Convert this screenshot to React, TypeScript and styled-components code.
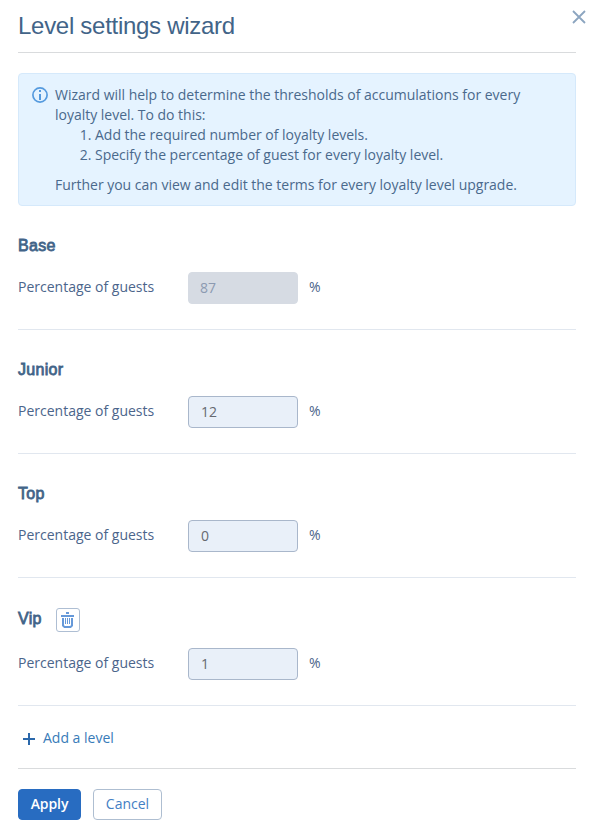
import React from "react";
import styled, { createGlobalStyle } from "styled-components";

const GlobalStyle = createGlobalStyle`
  *, *::before, *::after { box-sizing: border-box; }
  body {
    margin: 0;
    background: #fff;
    font-family: "Open Sans", sans-serif;
    font-size: 14px;
    line-height: 20px;
    color: #456286;
  }
`;

const Dialog = styled.main`
  width: 594px;
  height: 836px;
  padding: 0 18px;
  background: #fff;
`;

const Header = styled.header`
  display: flex;
  justify-content: space-between;
  align-items: flex-start;
  height: 53px;
  border-bottom: 1px solid #d9dbdd;
`;

const Title = styled.h1`
  margin: 9px 0 0;
  font: 400 24px/34px "Liberation Sans", sans-serif;
  letter-spacing: -0.28px;
  color: #426488;
`;

const CloseButton = styled.button`
  display: flex;
  margin: 10px -10px 0 0;
  padding: 0;
  border: 0;
  background: none;
  color: #8ca5c0;
`;

const Notice = styled.section`
  display: flex;
  height: 133px;
  margin-top: 20px;
  padding: 11px 13px;
  border: 1px solid #d5e9fb;
  border-radius: 4px;
  background: #e5f3ff;
  color: #4a698c;
  svg { flex: none; margin: 2px 7px 0 0; }
`;

const NoticeText = styled.div`
  width: 480px;
  letter-spacing: -0.014px;
  p { margin: 0; }
`;

const Steps = styled.ol`
  margin: 0 0 10px;
  padding: 0 0 0 40px;
`;

const LevelSection = styled.section<{ $removable: boolean }>`
  padding: ${(p) => (p.$removable ? 30 : 27)}px 0 25px;
  border-bottom: 1px solid #e1e7ef;
`;

const LevelHeading = styled.div<{ $removable: boolean }>`
  display: flex;
  gap: 14px;
  height: 24px;
  margin-bottom: ${(p) => (p.$removable ? 16 : 15)}px;
`;

const LevelName = styled.h2<{ $raised: boolean }>`
  margin: ${(p) => (p.$raised ? -1 : 1)}px 0 0;
  font: 400 16px/24px "Liberation Sans", sans-serif;
  letter-spacing: 0.3px;
  -webkit-text-stroke: 0.8px #426488;
  color: #426488;
`;

const DeleteButton = styled.button`
  display: flex;
  width: 24px;
  height: 24px;
  padding: 3px;
  border: 1px solid #aebed3;
  border-radius: 3px;
  background: #fff;
`;

const Field = styled.label`
  display: flex;
  align-items: center;
  height: 32px;
`;

const FieldLabel = styled.span`
  width: 170px;
  margin-top: -2px;
  color: #4b658b;
`;

const Input = styled.input`
  width: 110px;
  height: 32px;
  padding: 0 12px 1px;
  border: 1px solid #a9b7cb;
  border-radius: 4px;
  outline: 0;
  background: #e9f0f9;
  font: 14px/20px "Open Sans", sans-serif;
  color: #666970;
  &:disabled {
    padding-left: 11px;
    border-color: #d6dbe3;
    background: #d6dbe3;
    color: #8c9ab1;
  }
`;

const Unit = styled.span`
  margin: -2px 0 0 11px;
  color: #4b658b;
`;

const AddButton = styled.button`
  display: flex;
  align-items: center;
  gap: 8px;
  height: 62px;
  padding: 0 0 0 5px;
  border: 0;
  background: none;
  font: 14px/20px "Open Sans", sans-serif;
  color: #387bb8;
  svg { margin-top: 4px; }
  span { margin-top: 2px; }
`;

const Footer = styled.footer`
  display: flex;
  gap: 12px;
  padding-top: 20px;
  border-top: 1px solid #d9dbdd;
`;

const Button = styled.button<{ $primary?: boolean }>`
  width: ${(p) => (p.$primary ? 63 : 69)}px;
  height: 31px;
  padding: 0 0 1px;
  border: 1px solid ${(p) => (p.$primary ? "#286cc1" : "#aebed1")};
  border-radius: 4px;
  background: ${(p) => (p.$primary ? "#286cc1" : "#fff")};
  font: ${(p) => (p.$primary ? 600 : 400)} 14px/20px "Open Sans", sans-serif;
  letter-spacing: ${(p) => (p.$primary ? -0.1 : 0)}px;
  color: ${(p) => (p.$primary ? "#fff" : "#4380c4")};
`;

const CloseIcon = () => (
  <svg width="14" height="14" viewBox="0 0 14 14" stroke="currentColor" strokeWidth="1.8">
    <path d="M1 1l12 12M13 1L1 13" />
  </svg>
);

const InfoIcon = () => (
  <svg width="16" height="16" viewBox="0 0 16 16">
    <circle cx="8" cy="8" r="7.1" fill="none" stroke="#559ade" strokeWidth="1.7" />
    <path d="M7 3h2v2H7zM7 7h2v6H7z" fill="#559ade" />
  </svg>
);

const TrashIcon = () => (
  <svg width="16" height="16" viewBox="0 0 16 16" fill="#6699d9">
    <path d="M6 0h3v2H6zM1 3h13v2H1z" />
    <path d="M3 6v7.5L4.5 15h6L12 13.5V6" fill="none" stroke="#6699d9" strokeWidth="2" />
    <path d="M5 6h1v6H5zM7 6h1v6H7zM9 6h1v6H9z" />
  </svg>
);

const PlusIcon = () => (
  <svg width="12" height="12" viewBox="0 0 12 12" fill="#2b68ab">
    <path d="M5 0h2v5h5v2H7v5H5V7H0V5h5z" />
  </svg>
);

type Level = { name: string; value: string; disabled?: boolean; removable?: boolean };

const levels: Level[] = [
  { name: "Base", value: "87", disabled: true },
  { name: "Junior", value: "12" },
  { name: "Top", value: "0" },
  { name: "Vip", value: "1", removable: true },
];

function LevelRow({ name, value, disabled, removable = false }: Level) {
  return (
    <LevelSection $removable={removable}>
      <LevelHeading $removable={removable}>
        <LevelName $raised={removable}>{name}</LevelName>
        {removable && (
          <DeleteButton aria-label={`Delete ${name}`}>
            <TrashIcon />
          </DeleteButton>
        )}
      </LevelHeading>
      <Field>
        <FieldLabel>Percentage of guests</FieldLabel>
        <Input defaultValue={value} disabled={disabled} />
        <Unit>%</Unit>
      </Field>
    </LevelSection>
  );
}

export default function App() {
  return (
    <>
      <GlobalStyle />
      <Dialog>
        <Header>
          <Title>Level settings wizard</Title>
          <CloseButton aria-label="Close"><CloseIcon /></CloseButton>
        </Header>
        <Notice>
          <InfoIcon />
          <NoticeText>
            <p>Wizard will help to determine the thresholds of accumulations for every loyalty level. To do this:</p>
            <Steps>
              <li>Add the required number of loyalty levels.</li>
              <li>Specify the percentage of guest for every loyalty level.</li>
            </Steps>
            <p>Further you can view and edit the terms for every loyalty level upgrade.</p>
          </NoticeText>
        </Notice>
        {levels.map((level) => <LevelRow key={level.name} {...level} />)}
        <AddButton><PlusIcon /><span>Add a level</span></AddButton>
        <Footer>
          <Button $primary>Apply</Button>
          <Button>Cancel</Button>
        </Footer>
      </Dialog>
    </>
  );
}
